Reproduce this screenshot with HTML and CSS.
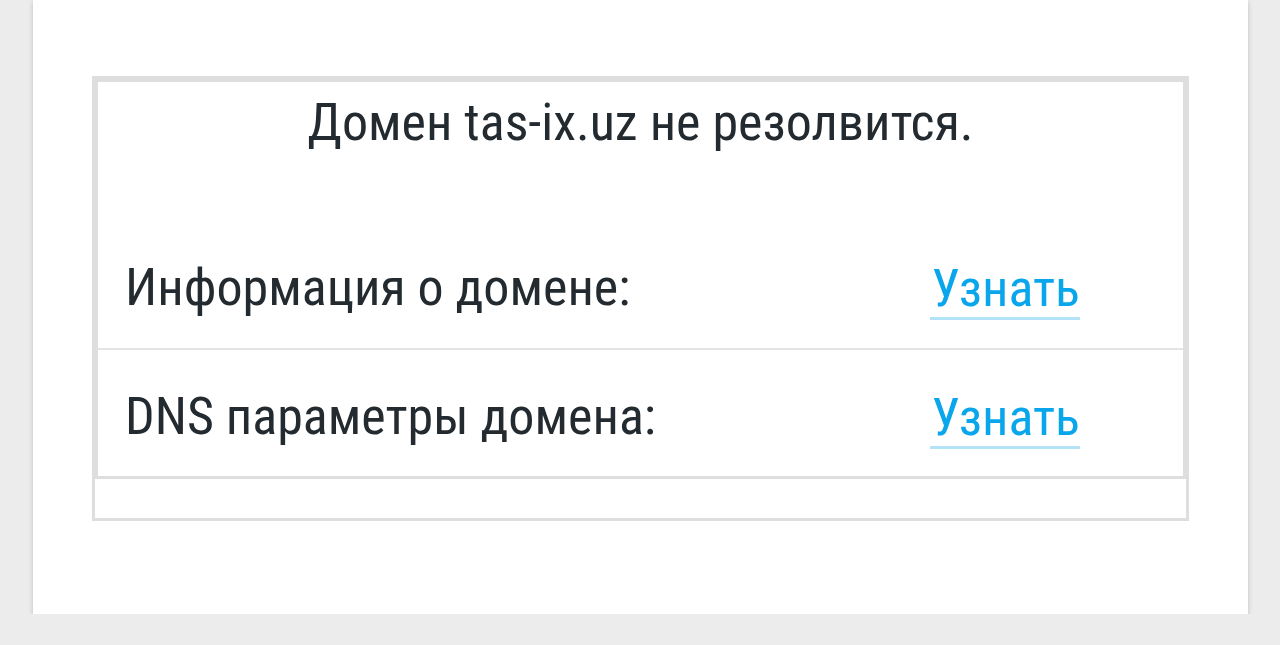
FILE: index.html
```html
<!DOCTYPE html>
<html lang="ru">
<head>
<meta charset="utf-8">
<title>Домен tas-ix.uz</title>
<link rel="stylesheet" href="styles.css">
</head>
<body>
<div class="card">
  <div class="table">
    <div class="box">
      <div class="head">Домен tas-ix.uz не резолвится.</div>
      <div class="row">
        <span class="label">Информация о домене:</span>
        <a class="link" href="#">Узнать</a>
      </div>
      <div class="row">
        <span class="label">DNS параметры домена:</span>
        <a class="link" href="#">Узнать</a>
      </div>
    </div>
    <div class="empty"></div>
  </div>
</div>
</body>
</html>
```
FILE: styles.css
```css
html, body {
  margin: 0;
  padding: 0;
  background: #ececec;
}
body {
  font-family: Roboto, "Noto Sans", sans-serif;
  font-stretch: 75%;
  font-variation-settings: "wdth" 75;
  color: #232b30;
}
.card {
  margin-left: 33px;
  width: 1215px;
  height: 614px;
  box-sizing: border-box;
  background: #fff;
  box-shadow: 0 2px 5px rgba(0,0,0,0.2);
  padding: 76px 0 0 59px;
}
.table {
  width: 1097px;
  box-sizing: border-box;
  border: 3px solid #dedede;
}
.box {
  border: 3px solid #dedede;
}
.head {
  font-size: 52px;
  line-height: 56px;
  text-align: center;
  padding: 13px 0 69px;
}
.row {
  display: flex;
  align-items: center;
  justify-content: space-between;
  height: 128px;
  box-sizing: border-box;
  padding: 6px 103px 0 27px;
  font-size: 52px;
}
.row + .row {
  border-top: 2px solid #e4e4e4;
}
.link {
  color: #0aa6ec;
  text-decoration: none;
  display: inline-block;
  line-height: 56px;
  padding: 6px 0 0 1px;
  border-bottom: 3px solid #b3e3f6;
}
.empty {
  height: 39px;
}
```
